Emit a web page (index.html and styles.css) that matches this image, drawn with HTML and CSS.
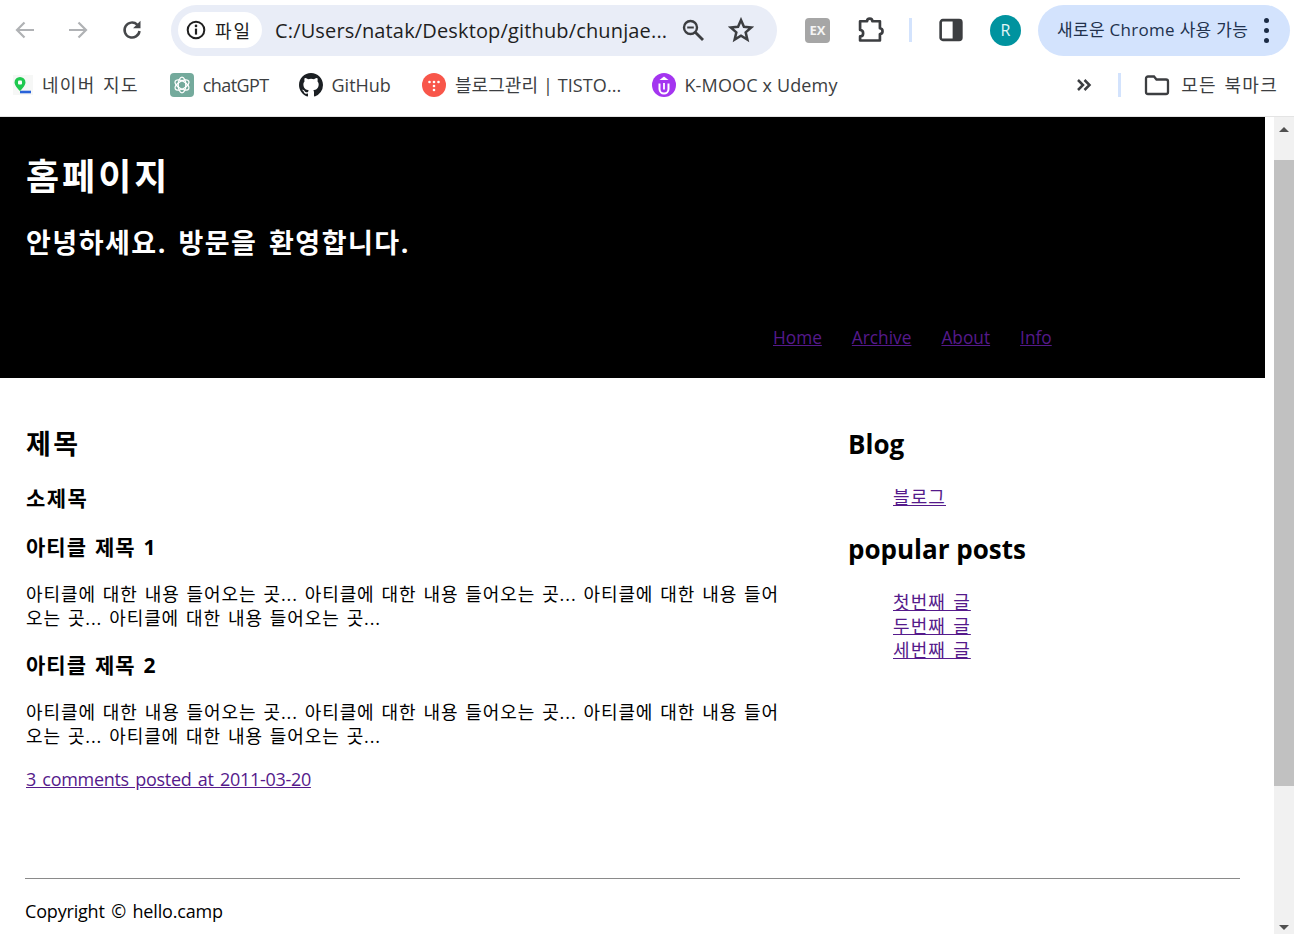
FILE: index.html
```html
<!DOCTYPE html>
<html lang="ko">
<head>
    <meta charset="UTF-8">
    <title>홈페이지</title>
    <link rel="stylesheet" href="styles.css">
</head>
<body>
    <div class="chrome">
        <div class="toolbar">
            <svg class="nav-icon back" viewBox="0 0 24 24"><path d="M21 12H4.500M11.500 4.500L4 12l7.500 7.500" fill="none" stroke="#b0b2b5" stroke-width="2.200"/></svg>
            <svg class="nav-icon forward" viewBox="0 0 24 24"><path d="M3 12h16.500M12.500 4.500L20 12l-7.500 7.500" fill="none" stroke="#b0b2b5" stroke-width="2.200"/></svg>
            <svg class="nav-icon reload" viewBox="0 0 24 24"><path d="M19.500 13a7.500 7.500 0 1 1-2.300-6.400" fill="none" stroke="#45474a" stroke-width="2.500"/><path d="M20.500 2.800v7.400h-7.400z" fill="#45474a"/></svg>
            <div class="omnibox">
                <div class="chip">
                    <svg class="info" viewBox="0 0 20 20"><circle cx="10" cy="10" r="8.300" fill="none" stroke="#1f1f1f" stroke-width="2"/><path d="M10 8.600v6" stroke="#1f1f1f" stroke-width="2.200"/><circle cx="10" cy="5.900" r="1.300" fill="#1f1f1f"/></svg>
                    <span>파일</span>
                </div>
                <span class="url">C:/Users/natak/Desktop/github/chunjae...</span>
                <svg class="zoom-icon" viewBox="0 0 24 24"><circle cx="9.500" cy="9.500" r="6.500" fill="none" stroke="#3c3e41" stroke-width="2.400"/><path d="M14 14l8 8" stroke="#3c3e41" stroke-width="2.800"/><path d="M6.200 9.500h6.600" stroke="#3c3e41" stroke-width="2"/></svg>
                <svg class="star" viewBox="0 0 24 24"><path d="M12 2.800l2.700 6.300 6.800.6-5.200 4.500 1.600 6.700L12 17.300l-5.900 3.600 1.600-6.700-5.200-4.500 6.800-.6z" fill="none" stroke="#3c3e41" stroke-width="2.300"/></svg>
            </div>
            <div class="ex-badge">EX</div>
            <svg class="puzzle" viewBox="0 0 24 24"><path d="M3.500 4.500h6c0-3 4.500-3 4.500 0h6.500v6c3 .3 3 4.700 0 5v5.500h-17v-3.500c3.500 0 3.500-5.500 0-5.500z" fill="none" stroke="#3c3e41" stroke-width="2.300" stroke-linejoin="round"/></svg>
            <div class="divider"></div>
            <svg class="side-panel" viewBox="0 0 22 22"><rect x="1.500" y="2" width="19" height="18" rx="2" fill="none" stroke="#3c3e41" stroke-width="2.400"/><rect x="12.500" y="2" width="8" height="18" fill="#3c3e41"/></svg>
            <div class="avatar">R</div>
            <div class="update-pill">
                <span>새로운 Chrome 사용 가능</span>
                <div class="dots"><i></i><i></i><i></i></div>
            </div>
        </div>
        <div class="bookmarks">
            <div class="bookmark map">
                <svg class="favicon" viewBox="0 0 20 20"><rect width="20" height="20" fill="#f6f7f6"/><path d="M7 17h11" stroke="#2962d9" stroke-width="2.600"/><path d="M7 2a5.500 5.500 0 0 1 5.500 5.500C12.500 11 7 16 7 16S1.500 11 1.500 7.500A5.500 5.500 0 0 1 7 2z" fill="#1ec94f"/><rect x="5" y="5.500" width="4" height="4" rx="1" fill="#fff"/></svg>
                <span class="ko-tab">네이버 지도</span>
            </div>
            <div class="bookmark gpt">
                <svg class="favicon big" viewBox="0 0 24 24"><rect width="24" height="24" rx="4" fill="#74aa9c"/><g fill="none" stroke="#fff" stroke-width="1.300"><ellipse cx="12" cy="12" rx="3.800" ry="7.800"/><ellipse cx="12" cy="12" rx="3.800" ry="7.800" transform="rotate(60 12 12)"/><ellipse cx="12" cy="12" rx="3.800" ry="7.800" transform="rotate(120 12 12)"/></g></svg>
                <span class="gpt-label">chatGPT</span>
            </div>
            <div class="bookmark github">
                <svg class="favicon big" viewBox="0 0 16 16"><path fill="#1b1f23" d="M8 0C3.580 0 0 3.580 0 8c0 3.540 2.290 6.530 5.470 7.590.4.070.55-.17.55-.38 0-.19-.01-.82-.01-1.490-2.010.37-2.530-.49-2.690-.94-.09-.23-.48-.94-.82-1.130-.28-.15-.68-.52-.01-.53.630-.01 1.080.58 1.230.82.720 1.210 1.870.87 2.330.66.070-.52.280-.87.510-1.070-1.780-.2-3.640-.89-3.640-3.950 0-.87.310-1.590.820-2.150-.08-.2-.36-1.020.08-2.120 0 0 .67-.21 2.200.82a7.420 7.420 0 0 1 4 0c1.530-1.040 2.200-.82 2.200-.82.440 1.100.160 1.920.080 2.120.510.560.820 1.270.820 2.150 0 3.070-1.870 3.750-3.650 3.950.290.250.540.730.540 1.480 0 1.070-.01 1.930-.01 2.200 0 .210.150.460.550.380A8.010 8.010 0 0 0 16 8c0-4.420-3.580-8-8-8z"/></svg>
                <span>GitHub</span>
            </div>
            <div class="bookmark tistory">
                <svg class="favicon big" viewBox="0 0 24 24"><circle cx="12" cy="12" r="12" fill="#f8564a"/><g fill="#fff"><circle cx="7.500" cy="9" r="1.300"/><circle cx="12" cy="9" r="1.300"/><circle cx="16.500" cy="9" r="1.300"/><circle cx="12" cy="13" r="1.300"/><circle cx="12" cy="17" r="1.300"/></g></svg>
                <span class="tistory-label">블로그관리 | TISTO...</span>
            </div>
            <div class="bookmark mooc">
                <svg class="favicon big" viewBox="0 0 24 24"><circle cx="12" cy="12" r="12" fill="#a435f0"/><path d="M7.500 10.500v5.500a4.500 4.500 0 0 0 9 0v-5.500" fill="none" stroke="#fff" stroke-width="2"/><path d="M12 3.500l4.500 3.500h-9z" fill="#fff"/><path d="M12 10v6.500" stroke="#fff" stroke-width="1.800"/></svg>
                <span class="mooc-label">K-MOOC x Udemy</span>
            </div>
            <div class="bookmarks-end">
                <svg class="more" viewBox="0 0 16 16"><path d="M2 3l5 5-5 5M8.500 3l5 5-5 5" fill="none" stroke="#3c3e41" stroke-width="2.500"/></svg>
                <div class="divider"></div>
                <svg class="folder" viewBox="0 0 26 22"><path d="M2 4.500a2 2 0 0 1 2-2h6l2.500 3H22a2 2 0 0 1 2 2V18a2 2 0 0 1-2 2H4a2 2 0 0 1-2-2z" fill="none" stroke="#3c3e41" stroke-width="2.300"/></svg>
                <span class="ko-tab">모든 북마크</span>
            </div>
        </div>
    </div>

    <div class="viewport">
        <div class="page">
            <header class="site-header">
                <h1>홈페이지</h1>
                <h2>안녕하세요. 방문을 환영합니다.</h2>
                <nav class="site-nav">
                    <a href="#">Home</a>
                    <a href="#">Archive</a>
                    <a href="#">About</a>
                    <a href="#">Info</a>
                </nav>
            </header>
            <div class="content">
                <main class="main-col">
                    <h2 class="title">제목</h2>
                    <h3 class="subtitle">소제목</h3>
                    <h4 class="article-title">아티클 제목 1</h4>
                    <p class="article-text">아티클에 대한 내용 들어오는 곳... 아티클에 대한 내용 들어오는 곳... 아티클에 대한 내용 들어오는 곳... 아티클에 대한 내용 들어오는 곳...</p>
                    <h4 class="article-title">아티클 제목 2</h4>
                    <p class="article-text">아티클에 대한 내용 들어오는 곳... 아티클에 대한 내용 들어오는 곳... 아티클에 대한 내용 들어오는 곳... 아티클에 대한 내용 들어오는 곳...</p>
                    <a class="comments" href="#">3 comments posted at 2011-03-20</a>
                </main>
                <aside class="side-col">
                    <h3>Blog</h3>
                    <ul>
                        <li><a href="#">블로그</a></li>
                    </ul>
                    <h3>popular posts</h3>
                    <ul>
                        <li><a href="#">첫번째 글</a></li>
                        <li><a href="#">두번째 글</a></li>
                        <li><a href="#">세번째 글</a></li>
                    </ul>
                </aside>
            </div>
            <footer class="site-footer">Copyright © hello.camp</footer>
        </div>
        <div class="scrollbar">
            <div class="arrow up"></div>
            <div class="track"><div class="thumb"></div></div>
            <div class="arrow down"></div>
        </div>
    </div>
</body>
</html>
```

FILE: styles.css
```css
*{
    margin: 0;
    padding: 0;
    box-sizing: border-box;
}
html, body{
    height: 934px;
    overflow: hidden;
}
body{
    display: flex;
    flex-direction: column;
    background-color: #fff;
    color: #000;
    font-family: "Open Sans", "Noto Sans CJK KR", sans-serif;
}
a{
    color: #551a8b;
}

/* browser chrome */
.chrome{
    height: 117px;
    flex: none;
    border-bottom: 1px solid #e4e4e4;
    color: #3c3e41;
}
.toolbar{
    height: 60px;
    display: flex;
    align-items: center;
    padding-left: 13px;
}
.nav-icon{
    width: 24px;
    height: 24px;
    flex: none;
}
.forward{
    margin-left: 29px;
}
.reload{
    margin-left: 30px;
}
.omnibox{
    width: 606px;
    height: 51px;
    margin-left: 27px;
    padding: 0 23px 0 7px;
    display: flex;
    align-items: center;
    border-radius: 26px;
    background-color: #e9edf7;
}
.chip{
    width: 84px;
    height: 36px;
    flex: none;
    display: flex;
    align-items: center;
    gap: 9px;
    padding-left: 8px;
    border-radius: 18px;
    background-color: #fff;
    font-size: 18px;
    letter-spacing: 2px;
    color: #1f1f1f;
}
.info{
    width: 20px;
    height: 20px;
}
.url{
    width: 396px;
    margin-left: 13px;
    font-size: 20px;
    letter-spacing: .150px;
    white-space: nowrap;
    overflow: hidden;
    color: #1f1f1f;
}
.zoom-icon{
    width: 24px;
    height: 24px;
    margin-left: 10px;
}
.star{
    width: 26px;
    height: 26px;
    margin-left: 23px;
}
.ex-badge{
    width: 25px;
    height: 25px;
    margin-left: 28px;
    border-radius: 4px;
    background-color: #a6a6a6;
    color: #f4f4f4;
    font-size: 13px;
    font-weight: 700;
    line-height: 25px;
    text-align: center;
}
.puzzle{
    width: 28px;
    height: 28px;
    margin-left: 26px;
}
.divider{
    width: 3px;
    height: 24px;
    flex: none;
    background-color: #d3e3fd;
}
.toolbar .divider{
    margin-left: 25px;
}
.side-panel{
    width: 24px;
    height: 24px;
    margin-left: 27px;
}
.avatar{
    width: 31px;
    height: 31px;
    margin-left: 27px;
    border-radius: 50%;
    background-color: #00939f;
    color: #e3f6f7;
    font-size: 16px;
    line-height: 31px;
    text-align: center;
}
.update-pill{
    width: 252px;
    height: 51px;
    margin-left: 17px;
    padding-left: 19px;
    display: flex;
    align-items: center;
    border-radius: 26px;
    background-color: #d3e3fd;
    font-size: 17px;
    letter-spacing: .300px;
    line-height: 20px;
    color: #22324d;
}
.dots{
    margin-left: 16px;
    display: flex;
    flex-direction: column;
    gap: 5px;
}
.dots i{
    width: 5px;
    height: 5px;
    border-radius: 50%;
    background-color: #1b2b45;
}

.bookmarks{
    height: 50px;
    padding-left: 13px;
    display: flex;
    align-items: center;
    font-size: 18px;
    white-space: nowrap;
}
.bookmark{
    display: flex;
    align-items: center;
    gap: 9px;
}
.ko-tab{
    margin-bottom: 2px;
    letter-spacing: 1.300px;
    word-spacing: 1.500px;
}
.gpt-label{
    letter-spacing: -.600px;
}
.tistory-label{
    margin-bottom: 2px;
    letter-spacing: .100px;
}
.mooc-label{
    letter-spacing: .150px;
}
.favicon{
    width: 20px;
    height: 20px;
    flex: none;
}
.favicon.big{
    width: 24px;
    height: 24px;
}
.gpt{
    margin-left: 31px;
}
.github{
    margin-left: 30px;
}
.tistory{
    margin-left: 31px;
}
.mooc{
    margin-left: 31px;
    gap: 8px;
}
.bookmarks-end{
    margin-left: auto;
    padding-right: 16px;
    display: flex;
    align-items: center;
}
.more{
    width: 16px;
    height: 16px;
}
.bookmarks .divider{
    margin-left: 26px;
}
.folder{
    width: 26px;
    height: 22px;
    margin-left: 23px;
    margin-right: 11px;
}

/* page */
.viewport{
    flex: 1;
    display: flex;
    min-height: 0;
}
.page{
    width: 1274px;
    flex: none;
    overflow: hidden;
    font-size: 18px;
}
.site-header{
    width: 1265px;
    height: 261px;
    padding: 34px 0 0 26px;
    position: relative;
    background-color: #000;
    color: #fff;
}
.site-header h1{
    font-size: 36px;
    line-height: 52px;
    letter-spacing: 3px;
}
.site-header h2{
    margin-top: 20px;
    font-size: 27px;
    line-height: 40px;
    letter-spacing: 1.500px;
    word-spacing: 3px;
}
.site-nav{
    position: absolute;
    left: 773px;
    top: 209px;
    display: flex;
    gap: 30px;
    font-size: 17.300px;
}
.content{
    display: flex;
    padding: 47px 0 0 26px;
    height: 500px;
}
.main-col{
    width: 822px;
    flex: none;
}
.title{
    font-size: 27px;
    line-height: 38px;
    letter-spacing: 2.500px;
}
.subtitle{
    margin-top: 21px;
    font-size: 21px;
    line-height: 28px;
    letter-spacing: 1.400px;
}
.article-title{
    margin-top: 20px;
    font-size: 21px;
    line-height: 30px;
    letter-spacing: 1px;
    word-spacing: 1.500px;
}
.article-text{
    width: 755px;
    margin-top: 20px;
    margin-bottom: 1px;
    line-height: 24px;
    letter-spacing: .900px;
    word-spacing: 1.400px;
}
.comments{
    display: block;
    margin-top: 19px;
    line-height: 24px;
    letter-spacing: -.300px;
    word-spacing: 2px;
}
.side-col{
    padding-top: 1px;
}
.side-col h3{
    font-size: 26px;
    line-height: 36px;
}
.side-col ul{
    margin-top: 23px;
    list-style: none;
    padding-left: 45px;
    line-height: 24px;
    letter-spacing: 1.100px;
    word-spacing: 1.400px;
}
.side-col ul + h3{
    margin-top: 22px;
}
.site-footer{
    width: 1215px;
    margin-left: 25px;
    padding-top: 20px;
    border-top: 1px solid #8a8a8a;
    line-height: 24px;
    letter-spacing: -.180px;
    word-spacing: 2px;
}

/* scrollbar */
.scrollbar{
    width: 20px;
    flex: none;
    display: flex;
    flex-direction: column;
    align-items: center;
    background-color: #f1f1f1;
}
.arrow{
    width: 0;
    height: 0;
    flex: none;
    border-left: 5px solid transparent;
    border-right: 5px solid transparent;
}
.arrow.up{
    margin-top: 10px;
    border-bottom: 5px solid #505050;
}
.arrow.down{
    margin-bottom: 4px;
    border-top: 5px solid #505050;
}
.track{
    flex: 1;
    width: 100%;
}
.thumb{
    height: 626px;
    margin-top: 28px;
    background-color: #c1c1c1;
}
```
